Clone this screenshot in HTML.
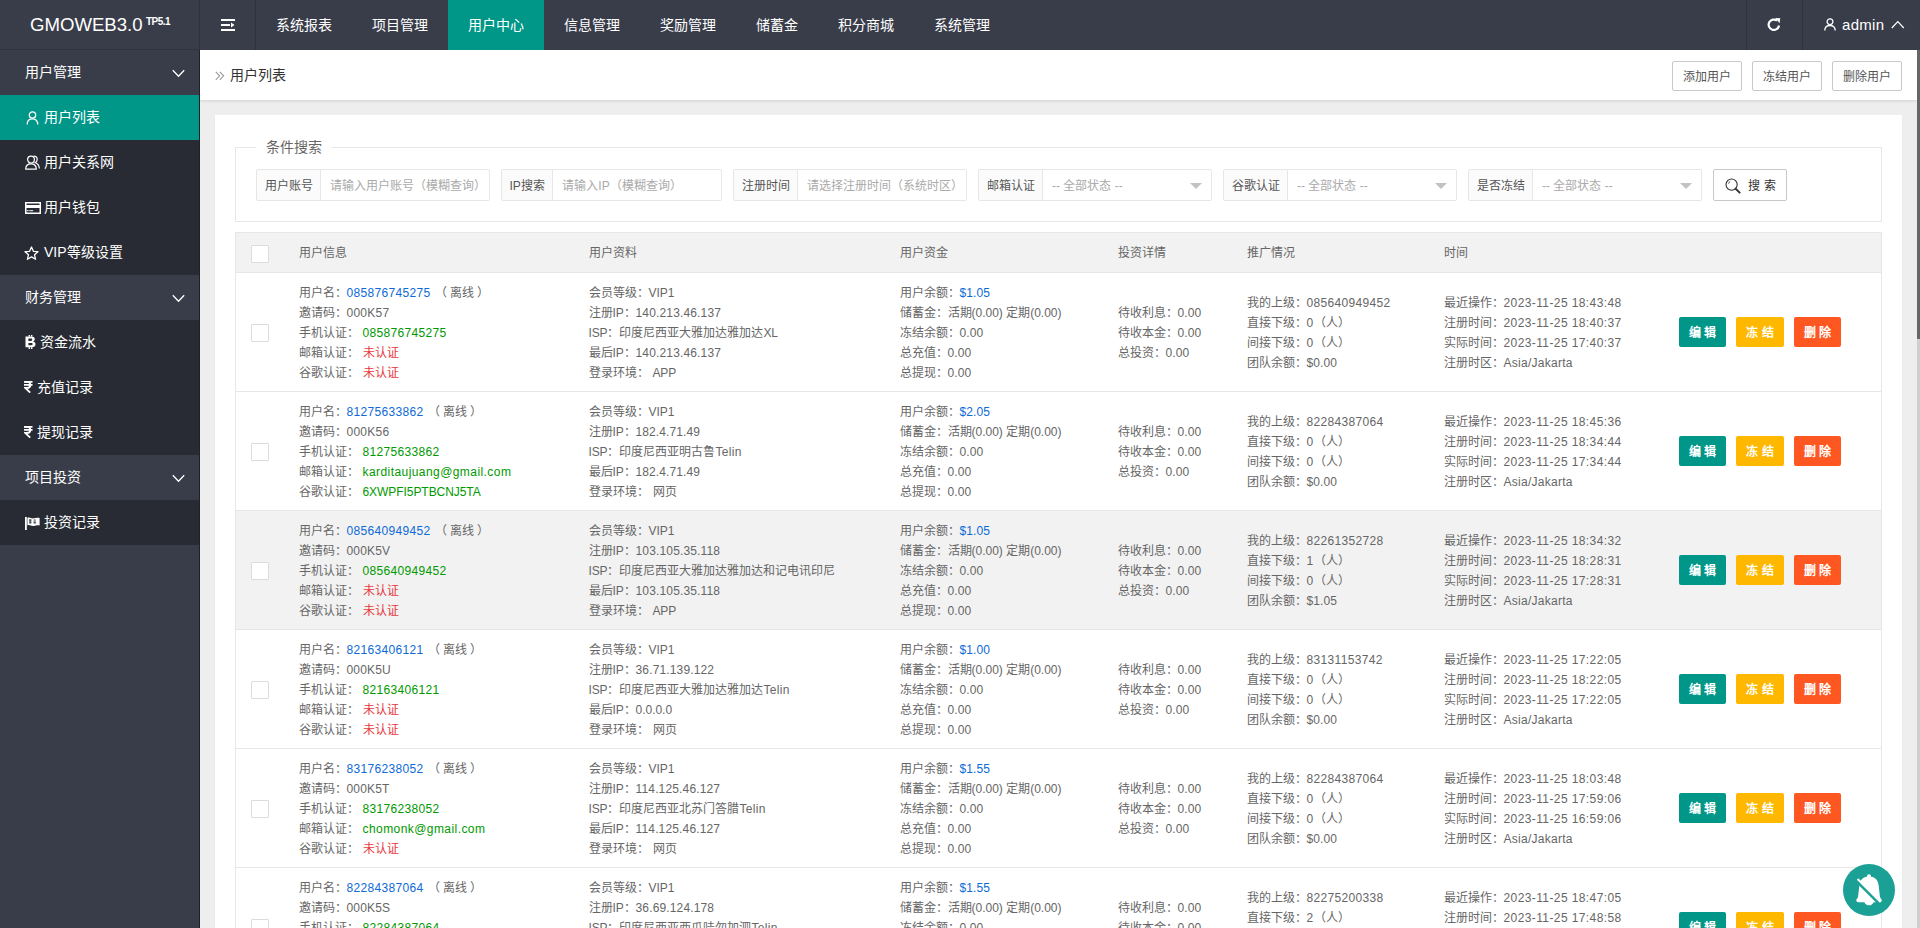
<!DOCTYPE html>
<html lang="zh-CN"><head><meta charset="utf-8"><title>GMOWEB3.0</title>
<style>
*{margin:0;padding:0;box-sizing:border-box}
html,body{width:1920px;height:928px;overflow:hidden;background:#eee;font-family:"Liberation Sans",sans-serif;color:#666;font-size:12px}
.hdr{position:absolute;left:0;top:0;width:1920px;height:50px;background:#393D49;color:#fff}
.logo{position:absolute;left:30px;top:0;height:50px;line-height:50px;font-size:18.6px;color:#fff;white-space:nowrap}
.logo sup{font-size:10px;position:absolute;left:116px;top:16px;line-height:12px;font-weight:bold;letter-spacing:-0.5px}
.vl{position:absolute;top:0;width:1px;height:50px;background:#2f323c}
.nav{position:absolute;left:256px;top:0;height:50px;display:flex}
.nav a{display:block;padding:0 20px;line-height:50px;font-size:14px;color:#fff;height:50px}
.nav a.on{background:#009688}
.side{position:absolute;left:0;top:50px;width:200px;height:878px;background:#393D49}
.side .bd{position:absolute;right:0;top:0;width:1px;height:100%;background:#1f2128}
.grp{height:45px;line-height:45px;padding-left:25px;font-size:14px;color:#fff;position:relative}
.it{height:45px;line-height:45px;padding-left:25px;font-size:14px;color:#fff;background:#282B33;position:relative}
.it.on{background:#009688}
.it svg{position:absolute;left:24px;top:16px}
.it span{position:absolute;left:44px;top:0}
.chev{position:absolute;left:172px;top:19px}
.main{position:absolute;left:200px;top:50px;width:1717px;height:878px;background:#eee;overflow:hidden}
.crumb{position:absolute;left:0;top:0;width:1717px;height:50px;background:#fff;box-shadow:0 1px 3px rgba(0,0,0,.12)}
.crumb .t{position:absolute;left:30px;top:0;line-height:50px;font-size:14px;color:#333}
.crumb .ar{position:absolute;left:15px;top:21px}
.tbtn{position:absolute;top:11px;height:30px;width:70px;border:1px solid #C9C9C9;border-radius:2px;background:#fff;color:#555;font-size:12px;line-height:30px;text-align:center}
.card{position:absolute;left:15px;top:65px;width:1687px;height:900px;background:#fff;box-shadow:0 1px 2px 0 rgba(0,0,0,.05)}
.fs{position:absolute;left:20px;top:32px;width:1647px;height:75px;border:1px solid #e6e6e6}
.legend{position:absolute;left:20px;top:-11px;padding:0 10px;background:#fff;font-size:14px;line-height:20px;color:#666}
.ig{position:absolute;top:21px;height:32px;display:flex}
.ig .lb{height:32px;line-height:32px;padding:0 7.5px;border:1px solid #e6e6e6;background:#FBFBFB;color:#555;font-size:12px;border-radius:2px 0 0 2px;white-space:nowrap}
.ig .in{height:32px;line-height:32px;width:169px;border:1px solid #e6e6e6;border-left:0;background:#fff;color:#aaa;font-size:12px;padding-left:9px;border-radius:0 2px 2px 0;white-space:nowrap;position:relative}
.ig .in .tri{position:absolute;right:9px;top:13px;width:0;height:0;border-left:6px solid transparent;border-right:6px solid transparent;border-top:6px solid #c2c2c2}
.sbtn{position:absolute;left:1498px;top:21px;width:74px;height:32px;border:1px solid #C9C9C9;border-radius:2px;color:#333;font-size:12px;line-height:32px}
.tbl{position:absolute;left:20px;top:117px;width:1647px;border-collapse:collapse;table-layout:fixed}
.tbl th,.tbl td{border-top:1px solid #e6e6e6;border-bottom:1px solid #e6e6e6;padding:10px 14px 8px;line-height:20px;font-size:12px;text-align:left;vertical-align:middle;color:#666;white-space:nowrap;font-weight:normal}
.tbl th{background:#f2f2f2;height:40px;padding-top:0;padding-bottom:0}
.tbl{border-left:1px solid #e6e6e6;border-right:1px solid #e6e6e6}
.tbl td.c1,.tbl td.c2,.tbl td.c3{vertical-align:top}
.tbl tr.hov td{background:#f2f2f2}
.tbl td.c0,.tbl th:first-child{padding:0 15px}
.tbl td.c7{padding:9px 14px 9px 14.5px}
.cb{display:block;width:18px;height:18px;border:1px solid #dcdcdc;background:#fff;border-radius:1px;position:relative;top:1px}
.blue{color:#0d6ad8}
.green{color:#009900}
.red{color:#e8383d}
.off{margin-left:4px}
.sp{display:inline-block;width:4px}
.btn{display:inline-block;height:30px;line-height:32px;padding:0 10px;font-size:12px;font-weight:bold;color:#fff;border-radius:2px;margin-right:10px;white-space:nowrap}
.btn.g{background:#009688}.btn.y{background:#FFB800}.btn.r{background:#FF5722}
.scr{position:absolute;left:1917px;top:50px;width:3px;height:878px;background:#cfcfcf}
.scr i{position:absolute;left:0;top:0;width:3px;height:289px;background:#666}
.bell{position:absolute;left:1843px;top:864px;width:52px;height:52px;border-radius:50%;background:#1aa094}

</style></head><body>
<div class="hdr">
  <div class="logo">GMOWEB3.0<sup>TP5.1</sup></div>
  <div class="vl" style="left:199px"></div><div style="position:absolute;left:0;top:49px;width:199px;height:1px;background:#30333d"></div>
  <svg style="position:absolute;left:221px;top:19px" width="14" height="12" viewBox="0 0 14 12"><rect x="0" y="0" width="14" height="2" fill="#fff"/><rect x="0" y="5" width="9" height="2" fill="#fff"/><path d="M10 3.5 L13.5 6 L10 8.5Z" fill="#fff"/><rect x="0" y="10" width="14" height="2" fill="#fff"/></svg>
  <div class="vl" style="left:255px"></div>
  <div class="nav"><a>系统报表</a><a>项目管理</a><a class="on">用户中心</a><a>信息管理</a><a>奖励管理</a><a>储蓄金</a><a>积分商城</a><a>系统管理</a></div>
  <div class="vl" style="left:1746px"></div>
  <svg style="position:absolute;left:1767px;top:17px" width="14" height="15" viewBox="0 0 14 15"><path d="M12 8.5 A5.2 5.2 0 1 1 10 3.6" fill="none" stroke="#fff" stroke-width="2.2"/><path d="M8.2 1 L13.2 1.2 L12.6 6.2Z" fill="#fff"/></svg>
  <div class="vl" style="left:1802px"></div>
  <svg style="position:absolute;left:1824px;top:18px" width="12" height="13" viewBox="0 0 12 13"><circle cx="6" cy="3.7" r="2.9" fill="none" stroke="#fff" stroke-width="1.3"/><path d="M0.8 12.6 C0.8 9.2 3 7.5 6 7.5 C9 7.5 11.2 9.2 11.2 12.6" fill="none" stroke="#fff" stroke-width="1.3"/></svg>
  <div style="position:absolute;left:1842px;top:0;line-height:50px;font-size:15px;color:#fff;letter-spacing:0.3px">admin</div>
  <svg style="position:absolute;left:1891px;top:20px" width="14" height="9" viewBox="0 0 14 9"><path d="M0.8 8 L6.8 1.6 L12.8 8" fill="none" stroke="#fff" stroke-width="1.25"/></svg>
</div>
<div class="side">
  <div class="grp">用户管理<svg class="chev" width="14" height="9" viewBox="0 0 14 9"><path d="M0.8 1.2 L6.5 7.2 L12.2 1.2" fill="none" stroke="#fff" stroke-width="1.3"/></svg></div>
  <div class="it on"><svg style="left:26px;top:16px" width="13" height="14" viewBox="0 0 13 14"><circle cx="6.5" cy="4" r="3.2" fill="none" stroke="#fff" stroke-width="1.3"/><path d="M1.2 13.6 C1.2 9.6 3.6 7.9 6.5 7.9 C9.4 7.9 11.8 9.6 11.8 13.6" fill="none" stroke="#fff" stroke-width="1.3"/></svg><span>用户列表</span></div>
  <div class="it"><svg style="left:25px;top:15px" width="15" height="15" viewBox="0 0 15 15"><circle cx="6" cy="4.6" r="3.4" fill="none" stroke="#fff" stroke-width="1.2"/><path d="M0.7 14.2 C0.7 10.6 3 8.9 6 8.9 C9 8.9 11.3 10.6 11.3 14.2 Z" fill="none" stroke="#fff" stroke-width="1.2" stroke-linejoin="round"/><path d="M8.6 1.3 C10.4 0.8 12.2 2.2 12.2 4.3 C12.2 6 11.3 7.2 10.2 7.8 C12.6 8.6 14.3 10.6 14.3 13.6" fill="none" stroke="#fff" stroke-width="1.2"/></svg><span>用户关系网</span></div>
  <div class="it"><svg style="left:25px;top:17px" width="16" height="12" viewBox="0 0 16 12"><rect x="0.75" y="0.75" width="14.5" height="10.5" fill="none" stroke="#fff" stroke-width="1.5"/><rect x="0.75" y="3" width="14.5" height="3" fill="#fff"/><rect x="1.8" y="8.2" width="1.8" height="1" fill="#fff"/><rect x="4.3" y="8.2" width="3.8" height="1" fill="#fff"/></svg><span>用户钱包</span></div>
  <div class="it"><svg width="15" height="15" viewBox="0 0 15 15"><path d="M7.5 1 L9.4 5.3 L14 5.7 L10.5 8.7 L11.6 13.3 L7.5 10.9 L3.4 13.3 L4.5 8.7 L1 5.7 L5.6 5.3Z" fill="none" stroke="#fff" stroke-width="1.3" stroke-linejoin="round"/></svg><span>VIP等级设置</span></div>
  <div class="grp">财务管理<svg class="chev" width="14" height="9" viewBox="0 0 14 9"><path d="M0.8 1.2 L6.5 7.2 L12.2 1.2" fill="none" stroke="#fff" stroke-width="1.3"/></svg></div>
  <div class="it"><svg style="left:25px;top:15px" width="11" height="14" viewBox="0 0 11 14"><path d="M0.5 1.5 H6.5 C8.6 1.5 9.8 2.6 9.8 4.1 C9.8 5.2 9.1 6 8.2 6.4 C9.6 6.8 10.5 7.8 10.5 9.2 C10.5 11 9.1 12.3 6.8 12.3 H0.5Z M3.4 3.6 V5.9 H6 C6.8 5.9 7.2 5.5 7.2 4.75 C7.2 4 6.8 3.6 6 3.6Z M3.4 7.9 V10.3 H6.3 C7.2 10.3 7.7 9.8 7.7 9.1 C7.7 8.4 7.2 7.9 6.3 7.9Z" fill="#fff" fill-rule="evenodd"/><rect x="3.6" y="0" width="1.4" height="1.6" fill="#fff"/><rect x="6" y="0" width="1.4" height="1.6" fill="#fff"/><rect x="3.6" y="12.2" width="1.4" height="1.8" fill="#fff"/><rect x="6" y="12.2" width="1.4" height="1.8" fill="#fff"/></svg><span style="left:40px">资金流水</span></div>
  <div class="it"><svg style="left:24px;top:16px" width="9" height="12" viewBox="0 0 9 12"><path d="M0 0 H8.5 V1.7 H0Z M0 3.1 H8.5 V4.8 H0Z" fill="#fff"/><path d="M0.3 0.85 H3 C5.2 0.85 6.3 2.2 6.3 3.9 C6.3 5.7 5 6.9 3 6.9 H1.2 L6.2 11.6" fill="none" stroke="#fff" stroke-width="1.8"/></svg><span style="left:37px">充值记录</span></div>
  <div class="it"><svg style="left:24px;top:16px" width="9" height="12" viewBox="0 0 9 12"><path d="M0 0 H8.5 V1.7 H0Z M0 3.1 H8.5 V4.8 H0Z" fill="#fff"/><path d="M0.3 0.85 H3 C5.2 0.85 6.3 2.2 6.3 3.9 C6.3 5.7 5 6.9 3 6.9 H1.2 L6.2 11.6" fill="none" stroke="#fff" stroke-width="1.8"/></svg><span style="left:37px">提现记录</span></div>
  <div class="grp">项目投资<svg class="chev" width="14" height="9" viewBox="0 0 14 9"><path d="M0.8 1.2 L6.5 7.2 L12.2 1.2" fill="none" stroke="#fff" stroke-width="1.3"/></svg></div>
  <div class="it"><svg style="left:25px;top:17px" width="15" height="13" viewBox="0 0 15 13"><rect x="0" y="0" width="1.8" height="13" fill="#fff"/><path d="M2.4 0.8 C5 -0.3 6.5 2 9 1.3 C11 0.7 12.5 0.3 14.6 1 V8.6 C12.5 7.9 11 8.3 9 8.9 C6.5 9.6 5 7.3 2.4 8.4Z" fill="#fff"/><path d="M4.2 2.2 H6.4 V4.3 H4.2Z M8.6 4.5 H10.8 V6.6 H8.6Z M6.4 4.4 L8.6 4.4 M4.2 4.4 H6.4 V6.5 H4.2Z" fill="#282B33" opacity="0.85"/><path d="M8.6 2.2 H10.8 V4.3 H8.6Z" fill="#282B33" opacity="0.5"/></svg><span>投资记录</span></div>
  <div class="bd"></div>
</div>
<div class="main">
  <div class="crumb">
    <svg class="ar" width="10" height="10" viewBox="0 0 10 10"><path d="M0.8 0.8 L4.6 4.8 L0.8 8.8 M4.8 0.8 L8.6 4.8 L4.8 8.8" fill="none" stroke="#999" stroke-width="1.1"/></svg>
    <div class="t">用户列表</div>
    <div class="tbtn" style="left:1472px">添加用户</div>
    <div class="tbtn" style="left:1552px">冻结用户</div>
    <div class="tbtn" style="left:1632px">删除用户</div>
  </div>
  <div class="card">
    <div class="fs">
      <div class="legend">条件搜索</div>
      <div class="ig" style="left:20px"><div class="lb">用户账号</div><div class="in">请输入用户账号（模糊查询）</div></div>
      <div class="ig" style="left:265px"><div class="lb">IP搜索</div><div class="in">请输入IP（模糊查询）</div></div>
      <div class="ig" style="left:497px"><div class="lb">注册时间</div><div class="in">请选择注册时间（系统时区）</div></div>
      <div class="ig" style="left:742px"><div class="lb">邮箱认证</div><div class="in">-- 全部状态 --<i class="tri"></i></div></div>
      <div class="ig" style="left:987px"><div class="lb">谷歌认证</div><div class="in">-- 全部状态 --<i class="tri"></i></div></div>
      <div class="ig" style="left:1232px"><div class="lb">是否冻结</div><div class="in">-- 全部状态 --<i class="tri"></i></div></div>
      <div class="sbtn" style="left:1477px"><svg style="position:absolute;left:11px;top:8px" width="16" height="16" viewBox="0 0 16 16"><circle cx="6.6" cy="6.6" r="5.6" fill="none" stroke="#333" stroke-width="1.1"/><path d="M3.6 5.6 A3.2 3.2 0 0 1 5.2 3.4" fill="none" stroke="#333" stroke-width="0.9"/><path d="M10.6 10.6 L14.6 14.6" stroke="#333" stroke-width="2" stroke-linecap="round"/></svg><span style="position:absolute;left:34px;top:0;letter-spacing:4px">搜索</span></div>
    </div>
    <table class="tbl">
      <colgroup><col style="width:49px"><col style="width:290px"><col style="width:311px"><col style="width:218px"><col style="width:129px"><col style="width:197px"><col style="width:235px"><col></colgroup>
      <tr><th><i class="cb"></i></th><th>用户信息</th><th>用户资料</th><th>用户资金</th><th>投资详情</th><th>推广情况</th><th>时间</th><th></th></tr>
<tr>
<td class="c0"><i class="cb"></i></td>
<td class="c1">用户名：<span class="blue"><span style="letter-spacing:0.33px">085876745275</span></span><span class="off">（ 离线 ）</span><br>邀请码：<span style="letter-spacing:0.25px">000K57</span><br>手机认证：<span class="sp"></span><span class="green"><span style="letter-spacing:0.33px">085876745275</span></span><br>邮箱认证：<span class="sp"></span><span class="red">未认证</span><br>谷歌认证：<span class="sp"></span><span class="red">未认证</span></td>
<td class="c2">会员等级：<span style="letter-spacing:-0.03px">VIP1</span><br>注册<span style="letter-spacing:-0.15px">IP</span>：<span style="letter-spacing:0.15px">140.213.46.137</span><br><span style="letter-spacing:-0.15px">ISP</span>：印度尼西亚大雅加达雅加达<span style="letter-spacing:-0.15px">XL</span><br>最后<span style="letter-spacing:-0.15px">IP</span>：<span style="letter-spacing:0.15px">140.213.46.137</span><br>登录环境：<span class="sp"></span><span style="letter-spacing:-0.15px">APP</span></td>
<td class="c3">用户余额：<span class="blue"><span style="letter-spacing:0.10px">$1.05</span></span><br>储蓄金：活期(0.00) 定期(0.00)<br>冻结余额：<span style="letter-spacing:0.12px">0.00</span><br>总充值：<span style="letter-spacing:0.12px">0.00</span><br>总提现：<span style="letter-spacing:0.12px">0.00</span></td>
<td class="c4">待收利息：<span style="letter-spacing:0.12px">0.00</span><br>待收本金：<span style="letter-spacing:0.12px">0.00</span><br>总投资：<span style="letter-spacing:0.12px">0.00</span></td>
<td class="c5">我的上级：<span style="letter-spacing:0.33px">085640949452</span><br>直接下级：<span style="letter-spacing:0.33px">0</span>（人）<br>间接下级：<span style="letter-spacing:0.33px">0</span>（人）<br>团队余额：<span style="letter-spacing:0.10px">$0.00</span></td>
<td class="c6">最近操作：<span style="letter-spacing:0.40px">2023-11-25 18:43:48</span><br>注册时间：<span style="letter-spacing:0.40px">2023-11-25 18:40:37</span><br>实际时间：<span style="letter-spacing:0.40px">2023-11-25 17:40:37</span><br>注册时区：<span style="letter-spacing:0.27px">Asia/Jakarta</span></td>
<td class="c7"><a class="btn g">编 辑</a><a class="btn y">冻 结</a><a class="btn r">删 除</a></td>
</tr>
<tr>
<td class="c0"><i class="cb"></i></td>
<td class="c1">用户名：<span class="blue"><span style="letter-spacing:0.33px">81275633862</span></span><span class="off">（ 离线 ）</span><br>邀请码：<span style="letter-spacing:0.25px">000K56</span><br>手机认证：<span class="sp"></span><span class="green"><span style="letter-spacing:0.33px">81275633862</span></span><br>邮箱认证：<span class="sp"></span><span class="green"><span style="letter-spacing:0.43px">karditaujuang@gmail.com</span></span><br>谷歌认证：<span class="sp"></span><span class="green"><span style="letter-spacing:-0.06px">6XWPFI5PTBCNJ5TA</span></span></td>
<td class="c2">会员等级：<span style="letter-spacing:-0.03px">VIP1</span><br>注册<span style="letter-spacing:-0.15px">IP</span>：<span style="letter-spacing:0.10px">182.4.71.49</span><br><span style="letter-spacing:-0.15px">ISP</span>：印度尼西亚明古鲁<span style="letter-spacing:0.33px">Telin</span><br>最后<span style="letter-spacing:-0.15px">IP</span>：<span style="letter-spacing:0.10px">182.4.71.49</span><br>登录环境：<span class="sp"></span>网页</td>
<td class="c3">用户余额：<span class="blue"><span style="letter-spacing:0.10px">$2.05</span></span><br>储蓄金：活期(0.00) 定期(0.00)<br>冻结余额：<span style="letter-spacing:0.12px">0.00</span><br>总充值：<span style="letter-spacing:0.12px">0.00</span><br>总提现：<span style="letter-spacing:0.12px">0.00</span></td>
<td class="c4">待收利息：<span style="letter-spacing:0.12px">0.00</span><br>待收本金：<span style="letter-spacing:0.12px">0.00</span><br>总投资：<span style="letter-spacing:0.12px">0.00</span></td>
<td class="c5">我的上级：<span style="letter-spacing:0.33px">82284387064</span><br>直接下级：<span style="letter-spacing:0.33px">0</span>（人）<br>间接下级：<span style="letter-spacing:0.33px">0</span>（人）<br>团队余额：<span style="letter-spacing:0.10px">$0.00</span></td>
<td class="c6">最近操作：<span style="letter-spacing:0.40px">2023-11-25 18:45:36</span><br>注册时间：<span style="letter-spacing:0.40px">2023-11-25 18:34:44</span><br>实际时间：<span style="letter-spacing:0.40px">2023-11-25 17:34:44</span><br>注册时区：<span style="letter-spacing:0.27px">Asia/Jakarta</span></td>
<td class="c7"><a class="btn g">编 辑</a><a class="btn y">冻 结</a><a class="btn r">删 除</a></td>
</tr>
<tr class="hov">
<td class="c0"><i class="cb"></i></td>
<td class="c1">用户名：<span class="blue"><span style="letter-spacing:0.33px">085640949452</span></span><span class="off">（ 离线 ）</span><br>邀请码：<span style="letter-spacing:0.17px">000K5V</span><br>手机认证：<span class="sp"></span><span class="green"><span style="letter-spacing:0.33px">085640949452</span></span><br>邮箱认证：<span class="sp"></span><span class="red">未认证</span><br>谷歌认证：<span class="sp"></span><span class="red">未认证</span></td>
<td class="c2">会员等级：<span style="letter-spacing:-0.03px">VIP1</span><br>注册<span style="letter-spacing:-0.15px">IP</span>：<span style="letter-spacing:0.15px">103.105.35.118</span><br><span style="letter-spacing:-0.15px">ISP</span>：印度尼西亚大雅加达雅加达和记电讯印尼<br>最后<span style="letter-spacing:-0.15px">IP</span>：<span style="letter-spacing:0.15px">103.105.35.118</span><br>登录环境：<span class="sp"></span><span style="letter-spacing:-0.15px">APP</span></td>
<td class="c3">用户余额：<span class="blue"><span style="letter-spacing:0.10px">$1.05</span></span><br>储蓄金：活期(0.00) 定期(0.00)<br>冻结余额：<span style="letter-spacing:0.12px">0.00</span><br>总充值：<span style="letter-spacing:0.12px">0.00</span><br>总提现：<span style="letter-spacing:0.12px">0.00</span></td>
<td class="c4">待收利息：<span style="letter-spacing:0.12px">0.00</span><br>待收本金：<span style="letter-spacing:0.12px">0.00</span><br>总投资：<span style="letter-spacing:0.12px">0.00</span></td>
<td class="c5">我的上级：<span style="letter-spacing:0.33px">82261352728</span><br>直接下级：<span style="letter-spacing:0.33px">1</span>（人）<br>间接下级：<span style="letter-spacing:0.33px">0</span>（人）<br>团队余额：<span style="letter-spacing:0.10px">$1.05</span></td>
<td class="c6">最近操作：<span style="letter-spacing:0.40px">2023-11-25 18:34:32</span><br>注册时间：<span style="letter-spacing:0.40px">2023-11-25 18:28:31</span><br>实际时间：<span style="letter-spacing:0.40px">2023-11-25 17:28:31</span><br>注册时区：<span style="letter-spacing:0.27px">Asia/Jakarta</span></td>
<td class="c7"><a class="btn g">编 辑</a><a class="btn y">冻 结</a><a class="btn r">删 除</a></td>
</tr>
<tr>
<td class="c0"><i class="cb"></i></td>
<td class="c1">用户名：<span class="blue"><span style="letter-spacing:0.33px">82163406121</span></span><span class="off">（ 离线 ）</span><br>邀请码：<span style="letter-spacing:0.17px">000K5U</span><br>手机认证：<span class="sp"></span><span class="green"><span style="letter-spacing:0.33px">82163406121</span></span><br>邮箱认证：<span class="sp"></span><span class="red">未认证</span><br>谷歌认证：<span class="sp"></span><span class="red">未认证</span></td>
<td class="c2">会员等级：<span style="letter-spacing:-0.03px">VIP1</span><br>注册<span style="letter-spacing:-0.15px">IP</span>：<span style="letter-spacing:0.14px">36.71.139.122</span><br><span style="letter-spacing:-0.15px">ISP</span>：印度尼西亚大雅加达雅加达<span style="letter-spacing:0.33px">Telin</span><br>最后<span style="letter-spacing:-0.15px">IP</span>：<span style="letter-spacing:-0.03px">0.0.0.0</span><br>登录环境：<span class="sp"></span>网页</td>
<td class="c3">用户余额：<span class="blue"><span style="letter-spacing:0.10px">$1.00</span></span><br>储蓄金：活期(0.00) 定期(0.00)<br>冻结余额：<span style="letter-spacing:0.12px">0.00</span><br>总充值：<span style="letter-spacing:0.12px">0.00</span><br>总提现：<span style="letter-spacing:0.12px">0.00</span></td>
<td class="c4">待收利息：<span style="letter-spacing:0.12px">0.00</span><br>待收本金：<span style="letter-spacing:0.12px">0.00</span><br>总投资：<span style="letter-spacing:0.12px">0.00</span></td>
<td class="c5">我的上级：<span style="letter-spacing:0.33px">83131153742</span><br>直接下级：<span style="letter-spacing:0.33px">0</span>（人）<br>间接下级：<span style="letter-spacing:0.33px">0</span>（人）<br>团队余额：<span style="letter-spacing:0.10px">$0.00</span></td>
<td class="c6">最近操作：<span style="letter-spacing:0.40px">2023-11-25 17:22:05</span><br>注册时间：<span style="letter-spacing:0.40px">2023-11-25 18:22:05</span><br>实际时间：<span style="letter-spacing:0.40px">2023-11-25 17:22:05</span><br>注册时区：<span style="letter-spacing:0.27px">Asia/Jakarta</span></td>
<td class="c7"><a class="btn g">编 辑</a><a class="btn y">冻 结</a><a class="btn r">删 除</a></td>
</tr>
<tr>
<td class="c0"><i class="cb"></i></td>
<td class="c1">用户名：<span class="blue"><span style="letter-spacing:0.33px">83176238052</span></span><span class="off">（ 离线 ）</span><br>邀请码：<span style="letter-spacing:0.17px">000K5T</span><br>手机认证：<span class="sp"></span><span class="green"><span style="letter-spacing:0.33px">83176238052</span></span><br>邮箱认证：<span class="sp"></span><span class="green"><span style="letter-spacing:0.43px">chomonk@gmail.com</span></span><br>谷歌认证：<span class="sp"></span><span class="red">未认证</span></td>
<td class="c2">会员等级：<span style="letter-spacing:-0.03px">VIP1</span><br>注册<span style="letter-spacing:-0.15px">IP</span>：<span style="letter-spacing:0.15px">114.125.46.127</span><br><span style="letter-spacing:-0.15px">ISP</span>：印度尼西亚北苏门答腊<span style="letter-spacing:0.33px">Telin</span><br>最后<span style="letter-spacing:-0.15px">IP</span>：<span style="letter-spacing:0.15px">114.125.46.127</span><br>登录环境：<span class="sp"></span>网页</td>
<td class="c3">用户余额：<span class="blue"><span style="letter-spacing:0.10px">$1.55</span></span><br>储蓄金：活期(0.00) 定期(0.00)<br>冻结余额：<span style="letter-spacing:0.12px">0.00</span><br>总充值：<span style="letter-spacing:0.12px">0.00</span><br>总提现：<span style="letter-spacing:0.12px">0.00</span></td>
<td class="c4">待收利息：<span style="letter-spacing:0.12px">0.00</span><br>待收本金：<span style="letter-spacing:0.12px">0.00</span><br>总投资：<span style="letter-spacing:0.12px">0.00</span></td>
<td class="c5">我的上级：<span style="letter-spacing:0.33px">82284387064</span><br>直接下级：<span style="letter-spacing:0.33px">0</span>（人）<br>间接下级：<span style="letter-spacing:0.33px">0</span>（人）<br>团队余额：<span style="letter-spacing:0.10px">$0.00</span></td>
<td class="c6">最近操作：<span style="letter-spacing:0.40px">2023-11-25 18:03:48</span><br>注册时间：<span style="letter-spacing:0.40px">2023-11-25 17:59:06</span><br>实际时间：<span style="letter-spacing:0.40px">2023-11-25 16:59:06</span><br>注册时区：<span style="letter-spacing:0.27px">Asia/Jakarta</span></td>
<td class="c7"><a class="btn g">编 辑</a><a class="btn y">冻 结</a><a class="btn r">删 除</a></td>
</tr>
<tr>
<td class="c0"><i class="cb"></i></td>
<td class="c1">用户名：<span class="blue"><span style="letter-spacing:0.33px">82284387064</span></span><span class="off">（ 离线 ）</span><br>邀请码：<span style="letter-spacing:0.17px">000K5S</span><br>手机认证：<span class="sp"></span><span class="green"><span style="letter-spacing:0.33px">82284387064</span></span><br>邮箱认证：<span class="sp"></span><span class="red">未认证</span><br>谷歌认证：<span class="sp"></span><span class="red">未认证</span></td>
<td class="c2">会员等级：<span style="letter-spacing:-0.03px">VIP1</span><br>注册<span style="letter-spacing:-0.15px">IP</span>：<span style="letter-spacing:0.14px">36.69.124.178</span><br><span style="letter-spacing:-0.15px">ISP</span>：印度尼西亚西瓜哇勿加泗<span style="letter-spacing:0.33px">Telin</span><br>最后<span style="letter-spacing:-0.15px">IP</span>：<span style="letter-spacing:0.14px">36.69.124.178</span><br>登录环境：<span class="sp"></span>网页</td>
<td class="c3">用户余额：<span class="blue"><span style="letter-spacing:0.10px">$1.55</span></span><br>储蓄金：活期(0.00) 定期(0.00)<br>冻结余额：<span style="letter-spacing:0.12px">0.00</span><br>总充值：<span style="letter-spacing:0.12px">0.00</span><br>总提现：<span style="letter-spacing:0.12px">0.00</span></td>
<td class="c4">待收利息：<span style="letter-spacing:0.12px">0.00</span><br>待收本金：<span style="letter-spacing:0.12px">0.00</span><br>总投资：<span style="letter-spacing:0.12px">0.00</span></td>
<td class="c5">我的上级：<span style="letter-spacing:0.33px">82275200338</span><br>直接下级：<span style="letter-spacing:0.33px">2</span>（人）<br>间接下级：<span style="letter-spacing:0.33px">0</span>（人）<br>团队余额：<span style="letter-spacing:0.10px">$0.00</span></td>
<td class="c6">最近操作：<span style="letter-spacing:0.40px">2023-11-25 18:47:05</span><br>注册时间：<span style="letter-spacing:0.40px">2023-11-25 17:48:58</span><br>实际时间：<span style="letter-spacing:0.40px">2023-11-25 16:48:58</span><br>注册时区：<span style="letter-spacing:0.27px">Asia/Jakarta</span></td>
<td class="c7"><a class="btn g">编 辑</a><a class="btn y">冻 结</a><a class="btn r">删 除</a></td>
</tr>
    </table>
  </div>
</div>
<div class="scr"><i></i></div>
<div class="bell"><svg style="position:absolute;left:0;top:0" width="52" height="52" viewBox="0 0 52 52"><path d="M26 12.4 C31.5 12.4 35 15.6 35.6 21 L36.9 32.4 C37.2 34 38.4 34.9 38.8 36 C38.8 37.5 37.8 38.2 36.5 38.2 H30.6 C29.9 40.1 28.1 41.3 26 41.3 C23.9 41.3 22.1 40.1 21.4 38.2 H15.5 C14.2 38.2 13.2 37.5 13.2 36 C13.6 34.9 14.8 34 15.1 32.4 L16.4 21 C17 15.6 20.5 12.4 26 12.4Z" fill="#fff"/><circle cx="26" cy="12.2" r="2" fill="#fff"/><path d="M13.3 16.7 L35.9 39.3" stroke="#1aa094" stroke-width="2.8"/><path d="M14.6 15 L37.6 38" stroke="#fff" stroke-width="2"/></svg></div>

</body></html>
